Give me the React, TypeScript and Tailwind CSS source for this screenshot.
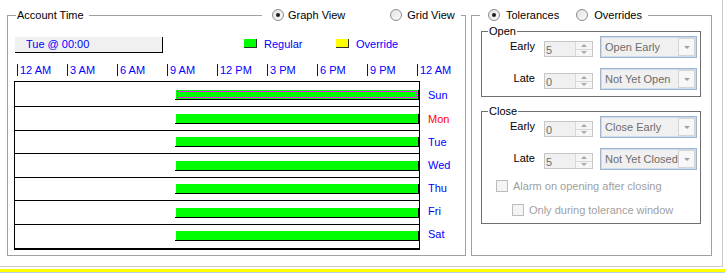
import type { ReactNode } from "react";

type Day = {
  name: string;
  color: string;
  cell: string;
  label: string;
  focus?: boolean;
};

const TICKS = ["12 AM", "3 AM", "6 AM", "9 AM", "12 PM", "3 PM", "6 PM", "9 PM", "12 AM"];

// row heights follow the picture, the drawn grid is not quite even
const DAYS: Day[] = [
  { name: "Sun", color: "text-[#0000ff]", cell: "h-[26px] border-t border-b pb-[6px]", label: "mb-[5px]", focus: true },
  { name: "Mon", color: "text-[#ff0000]", cell: "h-[24px] border-b pb-[6px]", label: "mb-[5px]" },
  { name: "Tue", color: "text-[#0000ff]", cell: "h-[23px] border-b pb-[6px]", label: "mb-[5px]" },
  { name: "Wed", color: "text-[#0000ff]", cell: "h-[24px] border-b pb-[6px]", label: "mb-[6px]" },
  { name: "Thu", color: "text-[#0000ff]", cell: "h-[23px] border-b pb-[6px]", label: "mb-[6px]" },
  { name: "Fri", color: "text-[#0000ff]", cell: "h-[24px] border-b pb-[6px]", label: "mb-[7px]" },
  { name: "Sat", color: "text-[#0000ff]", cell: "h-[25px] border-b-2 pb-[7px]", label: "mb-[9px]" },
];

function Radio({ checked }: { checked?: boolean }) {
  return (
    <span className="flex h-[12px] w-[12px] shrink-0 items-center justify-center rounded-full border border-[#8c8c8c] bg-gradient-to-br from-[#e2e2e2] to-[#fbfbfb]">
      {checked && <span className="h-[4px] w-[4px] rounded-full bg-[#1c1c1c]" />}
    </span>
  );
}

function Check({ children }: { children: ReactNode }) {
  return (
    <div className="flex h-[12px] items-center">
      <span className="h-[12px] w-[12px] shrink-0 border border-[#bcbcbc] bg-[#f4f4f4]" />
      <span className="ml-[5px] leading-[13px] text-[#a0a0a0]">{children}</span>
    </div>
  );
}

function Spin({ value }: { value: string }) {
  return (
    <div className="flex h-[16px] w-[49px] border border-[#c6c6c6] bg-[#f0f0f0]">
      <span className="flex-1 pl-[1px] pt-[2px] leading-[12px] text-[#6d6d6d]">{value}</span>
      <div className="flex w-[17px] flex-col border-l border-[#d9d9d9] bg-[#f6f6f6]">
        <div className="flex flex-1 items-center justify-center border-b border-[#d9d9d9]">
          <span className="h-0 w-0 border-x-[3px] border-b-[3px] border-x-transparent border-b-[#a8a8a8]" />
        </div>
        <div className="flex flex-1 items-center justify-center">
          <span className="h-0 w-0 border-x-[3px] border-t-[3px] border-x-transparent border-t-[#a8a8a8]" />
        </div>
      </div>
    </div>
  );
}

function Combo({ value }: { value: string }) {
  return (
    <div className="h-[22px] w-[97px] border border-[#9fb6ce]">
      <div className="flex h-full border border-[#cbdcee] bg-[#f0f0f0]">
        <span className="flex-1 truncate pl-[3px] leading-[18px] text-[#6d6d6d]">{value}</span>
        <div className="flex w-[17px] items-center justify-center border border-[#d4d4d4] bg-[#f7f7f7]">
          <span className="h-0 w-0 border-x-[3px] border-t-[3px] border-x-transparent border-t-[#a0a0a0]" />
        </div>
      </div>
    </div>
  );
}

function ToleranceRow({ label, spin, combo, className = "" }: { label: string; spin: string; combo: string; className?: string }) {
  return (
    <div className={`flex items-start ${className}`}>
      <span className="mt-[4px] w-[53px] text-right leading-[13px] text-black">{label}</span>
      <div className="ml-[9px] mt-[5px]">
        <Spin value={spin} />
      </div>
      <div className="ml-[7px]">
        <Combo value={combo} />
      </div>
    </div>
  );
}

function Bar({ focus }: { focus?: boolean }) {
  return (
    <div className="ml-[160px] h-[10px] border-b border-black pl-px">
      <div className="flex h-[9px] flex-col border-r border-black bg-[#00ff00] p-px">
        {/* focus rectangle on the selected day */}
        {focus && <div className="flex-1 border border-dotted border-[#ff00ff]" />}
      </div>
    </div>
  );
}

export default function App() {
  return (
    <div className="h-[273px] w-[725px] overflow-hidden bg-white font-['Liberation_Sans',Arial,sans-serif] text-[11px] text-black">
      <div className="flex h-[267px] w-[723px] gap-[5px] border-b border-r border-[#cacaca] pl-[7px] pt-[15px]">
        {/* Account Time */}
        <div className="relative h-[241px] w-[459px] border border-[#a0a0a0] pl-[6px]">
          <span className="absolute -top-[8px] left-[8px] bg-white pl-[1px] pr-[5px] leading-[14px]">
            Account Time
          </span>
          <div className="absolute -top-[8px] left-[254px] flex h-[14px] items-center bg-white pl-[10px] pr-[6px]">
            <Radio checked />
            <span className="ml-[4px] leading-[14px]">Graph View</span>
            <span className="ml-[45px]">
              <Radio />
            </span>
            <span className="ml-[5px] leading-[14px]">Grid View</span>
          </div>

          <div className="ml-px mt-[21px] flex h-[16px] items-center">
            <div className="h-[16px] w-[148px] border-b border-r border-black bg-[#f0f0f0] pl-[11px] leading-[15px] text-[#0000ff]">
              Tue @ 00:00
            </div>
            <span className="-mt-[3px] ml-[81px] h-[9px] w-[13px] border-b border-r border-[#303030] bg-[#00ff00]" />
            <span className="-mt-[1px] ml-[7px] w-[72px] text-[#0000ff]">Regular</span>
            <span className="-mt-[3px] h-[9px] w-[13px] border-b border-r border-[#303030] bg-[#ffff00]" />
            <span className="-mt-[1px] ml-[7px] text-[#0000ff]">Override</span>
          </div>

          <div className="ml-[3px] mt-[11px] flex h-[12px]">
            {TICKS.map((t, i) => (
              <span
                key={i}
                className="w-[50px] shrink-0 border-l border-[#0000ff] pl-[2px] leading-[12px] text-[#0000ff]"
              >
                {t}
              </span>
            ))}
          </div>

          <div className="mt-[5px]">
            {DAYS.map((d) => (
              <div key={d.name} className="flex">
                <div className={`flex w-[406px] flex-col justify-end border-x border-black ${d.cell}`}>
                  <Bar focus={d.focus} />
                </div>
                <span className={`ml-[8px] self-end leading-[13px] ${d.color} ${d.label}`}>{d.name}</span>
              </div>
            ))}
          </div>
        </div>

        {/* Tolerances / Overrides */}
        <div className="relative h-[241px] w-[241px] border border-[#a0a0a0] pl-[9px]">
          <div className="absolute -top-[8px] left-[8px] flex h-[14px] items-center bg-white pl-[8px] pr-[6px]">
            <Radio checked />
            <span className="ml-[6px] leading-[14px]">Tolerances</span>
            <span className="ml-[17px]">
              <Radio />
            </span>
            <span className="ml-[6px] leading-[14px]">Overrides</span>
          </div>

          <div className="relative mt-[15px] w-[220px] border border-[#707070] pb-[6px] pt-[4px]">
            <span className="absolute -top-[8px] left-[6px] bg-white px-[1px] leading-[14px]">Open</span>
            <ToleranceRow label="Early" spin="5" combo="Open Early" />
            <ToleranceRow label="Late" spin="0" combo="Not Yet Open" className="mt-[10px]" />
          </div>

          <div className="relative mt-[14px] w-[220px] border border-[#707070] pb-[7px] pt-[4px]">
            <span className="absolute -top-[8px] left-[6px] bg-white px-[1px] leading-[14px]">Close</span>
            <ToleranceRow label="Early" spin="0" combo="Close Early" />
            <ToleranceRow label="Late" spin="5" combo="Not Yet Closed" className="mt-[10px]" />
            <div className="ml-[14px] mt-[10px]">
              <Check>Alarm on opening after closing</Check>
            </div>
            <div className="ml-[30px] mt-[12px]">
              <Check>Only during tolerance window</Check>
            </div>
          </div>
        </div>
      </div>
      <div className="mt-[2px] h-[3px] bg-[#ffff00]" />
      <div className="h-px bg-[#b4d0ea]" />
    </div>
  );
}
